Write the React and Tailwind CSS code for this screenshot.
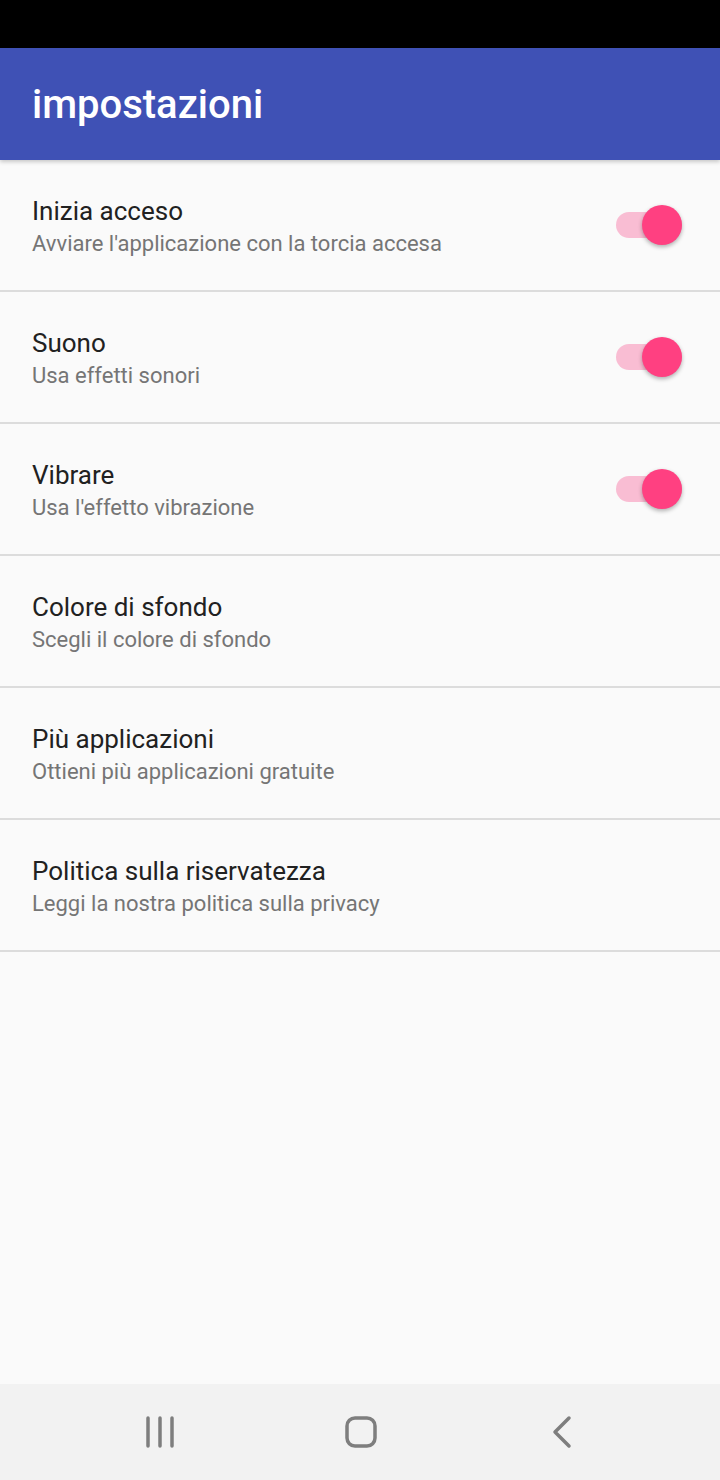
import React from "react";

const items = [
  { title: "Inizia acceso", sub: "Avviare l'applicazione con la torcia accesa", toggle: true },
  { title: "Suono", sub: "Usa effetti sonori", toggle: true },
  { title: "Vibrare", sub: "Usa l'effetto vibrazione", toggle: true },
  { title: "Colore di sfondo", sub: "Scegli il colore di sfondo" },
  { title: "Più applicazioni", sub: "Ottieni più applicazioni gratuite" },
  { title: "Politica sulla riservatezza", sub: "Leggi la nostra politica sulla privacy" },
];

function Toggle() {
  return (
    <div className="relative w-[66px] h-[40px] flex items-center">
      <div className="w-full h-[26px] rounded-full bg-[#f9bdd3]" />
      <div className="absolute right-0 top-0 w-[40px] h-[40px] rounded-full bg-[#ff4081] shadow-[0_2px_4px_rgba(0,0,0,0.3)]" />
    </div>
  );
}

function Row({ title, sub, toggle }) {
  return (
    <div className="h-[132px] border-b-2 border-[#dcdcdc] flex items-center pl-8 pr-[38px]">
      <div className="flex-1 min-w-0 pt-[4px]">
        <div className="text-[26px] leading-[34px] text-[#212121]">{title}</div>
        <div className="text-[22px] leading-[32px] text-[#757575]">{sub}</div>
      </div>
      {toggle && <Toggle />}
    </div>
  );
}

export default function App() {
  return (
    <div
      className="w-[720px] h-[1480px] flex flex-col bg-[#fafafa]"
      style={{ fontFamily: "Roboto, 'Noto Sans', sans-serif" }}
    >
      <div className="h-[48px] bg-black" />
      <div className="h-[112px] bg-[#3f51b5] flex items-center pl-8 pt-[2px] shadow-[0_2px_4px_rgba(0,0,0,0.2)] relative z-10">
        <h1 className="text-[40px] font-medium text-white leading-none">impostazioni</h1>
      </div>
      <div className="flex-1">
        {items.map((it) => (
          <Row key={it.title} {...it} />
        ))}
      </div>
      <div className="h-[96px] bg-[#f2f2f2] flex items-center pl-[140px] gap-[161px]">
        <svg width="40" height="40" viewBox="0 0 40 40">
          <g stroke="#7e7e7e" strokeWidth="3.5" strokeLinecap="round">
            <line x1="8" y1="6" x2="8" y2="34" />
            <line x1="20" y1="6" x2="20" y2="34" />
            <line x1="32" y1="6" x2="32" y2="34" />
          </g>
        </svg>
        <svg width="40" height="40" viewBox="0 0 40 40">
          <rect x="6" y="6" width="28" height="28" rx="8" fill="none" stroke="#7e7e7e" strokeWidth="3.5" />
        </svg>
        <svg width="40" height="40" viewBox="0 0 40 40">
          <polyline points="27,6 13,20 27,34" fill="none" stroke="#7e7e7e" strokeWidth="3.5" strokeLinecap="round" strokeLinejoin="round" />
        </svg>
      </div>
    </div>
  );
}
